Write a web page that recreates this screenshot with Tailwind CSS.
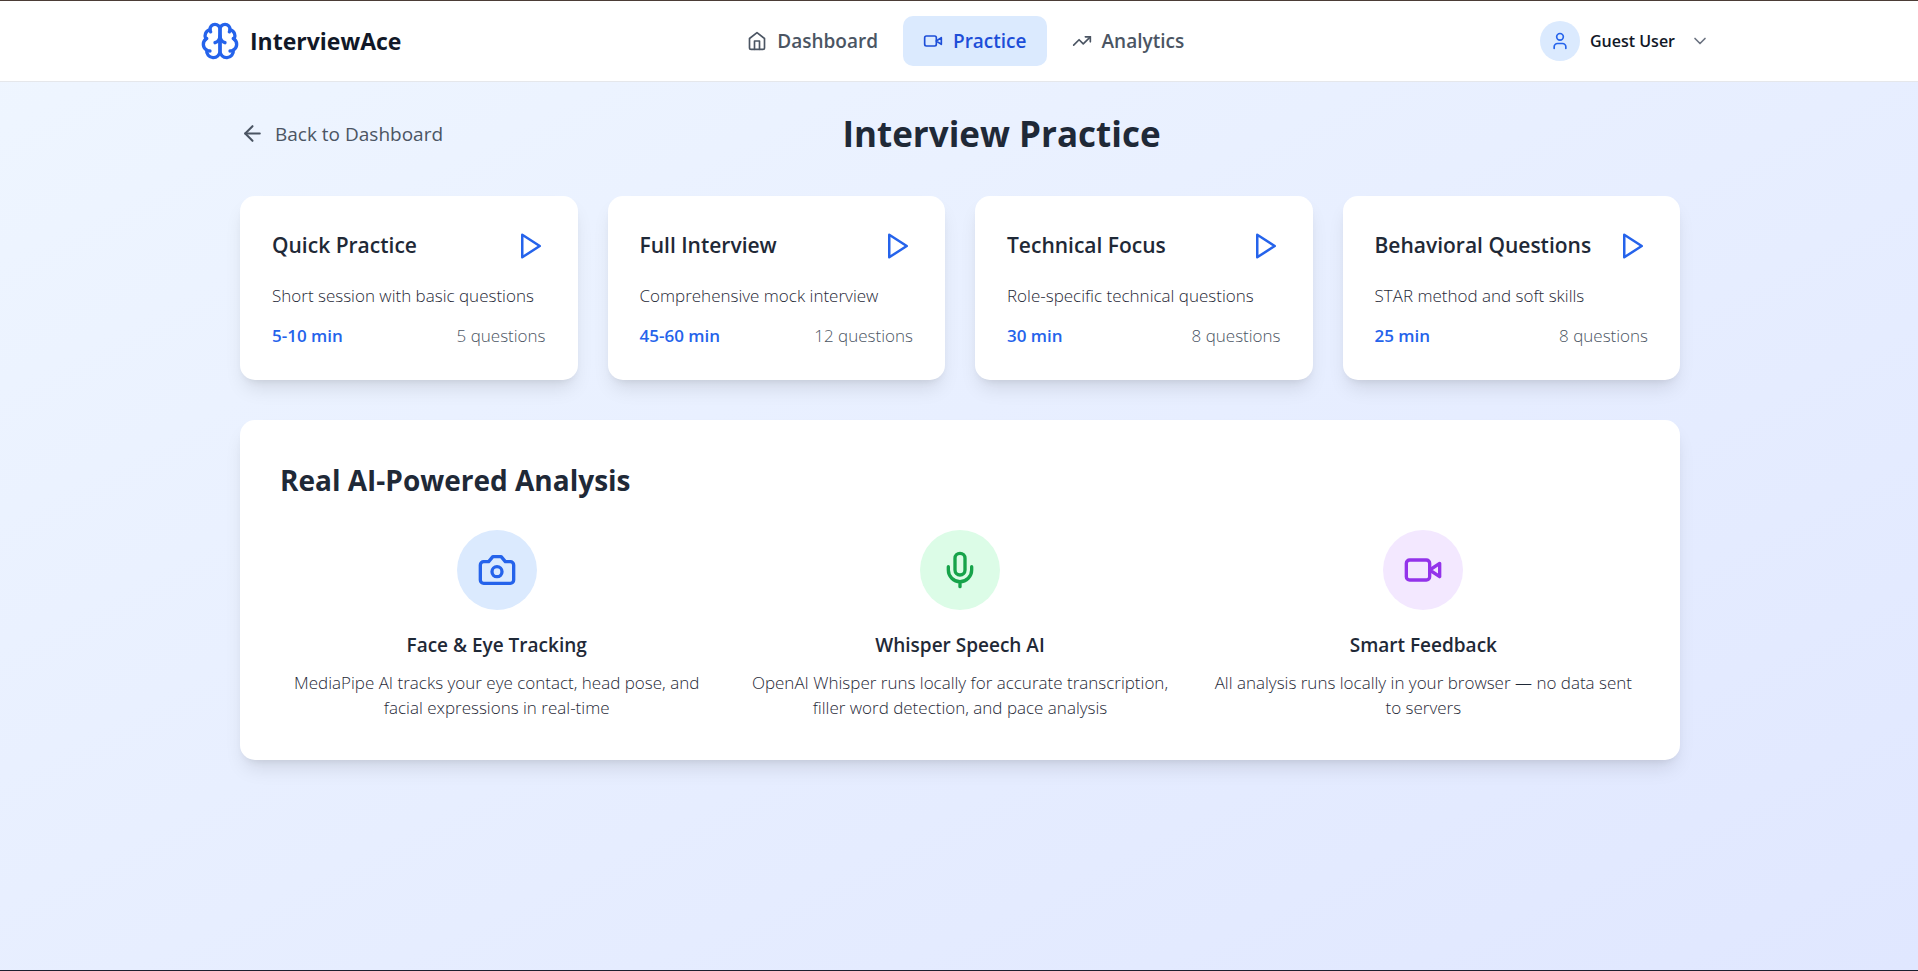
<!DOCTYPE html>
<html lang="en">
<head>
    <meta charset="UTF-8">
    <meta name="viewport" content="width=device-width, initial-scale=1.0">
    <title>InterviewAce - Practice</title>
    <script src="https://cdn.jsdelivr.net/npm/@tailwindcss/browser@4"></script>
</head>
<body class="flex min-h-screen flex-col border-t border-b border-t-[#4b3c36] border-b-[#1b2030] bg-linear-to-br from-[#eff6ff] to-[#e0e7ff] font-['Open_Sans','Noto_Sans',sans-serif] text-[#1f2937]">

<!-- top bar -->
<header class="border-b border-[#e5e7eb] bg-white">
    <div class="mx-auto flex h-20 max-w-[1602px] items-center justify-between pr-10 pl-[42px]">
        <a href="#" class="flex items-center gap-[10px] text-[23px] font-bold text-[#111827]">
            <svg class="size-10 text-[#2563eb]" viewBox="0 0 24 24" fill="none" stroke="currentColor" stroke-width="2" stroke-linecap="round" stroke-linejoin="round">
                <path d="M12 5a3 3 0 1 0-5.997.125 4 4 0 0 0-2.526 5.77 4 4 0 0 0 .556 6.588A4 4 0 1 0 12 18Z"/>
                <path d="M12 5a3 3 0 1 1 5.997.125 4 4 0 0 1 2.526 5.77 4 4 0 0 1-.556 6.588A4 4 0 1 1 12 18Z"/>
                <path d="M15 13a4.5 4.5 0 0 1-3-4 4.5 4.5 0 0 1-3 4"/>
                <path d="M17.599 6.5a3 3 0 0 0 .399-1.375"/>
                <path d="M6.003 5.125A3 3 0 0 0 6.401 6.5"/>
                <path d="M3.477 10.896a4 4 0 0 1 .585-.396"/>
                <path d="M19.938 10.5a4 4 0 0 1 .585.396"/>
                <path d="M6 18a4 4 0 0 1-1.967-.516"/>
                <path d="M19.967 17.484A4 4 0 0 1 18 18"/>
            </svg>
            <span>InterviewAce</span>
        </a>

        <nav class="flex gap-[5px] text-[19px] leading-[30px] font-semibold text-[#4b5563]">
            <a href="#" class="flex items-center gap-[10px] rounded-[10px] px-5 py-[10px]">
                <svg class="size-5" viewBox="0 0 24 24" fill="none" stroke="currentColor" stroke-width="2" stroke-linecap="round" stroke-linejoin="round">
                    <path d="m3 9 9-7 9 7v11a2 2 0 0 1-2 2H5a2 2 0 0 1-2-2z"/>
                    <polyline points="9 22 9 12 15 12 15 22"/>
                </svg>
                Dashboard
            </a>
            <a href="#" class="flex items-center gap-[10px] rounded-[10px] bg-[#dbeafe] px-5 py-[10px] text-[#1d4ed8]">
                <svg class="size-5" viewBox="0 0 24 24" fill="none" stroke="currentColor" stroke-width="2" stroke-linecap="round" stroke-linejoin="round">
                    <path d="m22 8-6 4 6 4V8Z"/>
                    <rect width="14" height="12" x="2" y="6" rx="2"/>
                </svg>
                Practice
            </a>
            <a href="#" class="flex items-center gap-[10px] rounded-[10px] px-5 py-[10px]">
                <svg class="size-5" viewBox="0 0 24 24" fill="none" stroke="currentColor" stroke-width="2" stroke-linecap="round" stroke-linejoin="round">
                    <polyline points="22 7 13.5 15.5 8.5 10.5 2 17"/>
                    <polyline points="16 7 22 7 22 13"/>
                </svg>
                Analytics
            </a>
        </nav>

        <button type="button" class="flex items-center gap-[10px] p-[10px] text-[16px] leading-[25px] font-semibold text-[#111827]">
            <span class="flex size-10 items-center justify-center rounded-full bg-[#dbeafe] text-[#2563eb]">
                <svg class="size-5" viewBox="0 0 24 24" fill="none" stroke="currentColor" stroke-width="2" stroke-linecap="round" stroke-linejoin="round">
                    <path d="M19 21v-2a4 4 0 0 0-4-4H9a4 4 0 0 0-4 4v2"/>
                    <circle cx="12" cy="7" r="4"/>
                </svg>
            </span>
            <span>Guest User</span>
            <svg class="ml-[5px] size-5 text-[#6b7280]" viewBox="0 0 24 24" fill="none" stroke="currentColor" stroke-width="2" stroke-linecap="round" stroke-linejoin="round">
                <path d="m6 9 6 6 6-6"/>
            </svg>
        </button>
    </div>
</header>

<main class="mx-auto w-full max-w-[1442px] grow pt-[29px] pb-10 pl-[2px]">
    <div class="mb-10 flex items-center justify-between">
        <button type="button" class="flex items-center gap-[10px] text-[19px] leading-[30px] text-[#4b5563]">
            <svg class="size-[25px]" viewBox="0 0 24 24" fill="none" stroke="currentColor" stroke-width="2" stroke-linecap="round" stroke-linejoin="round">
                <path d="m12 19-7-7 7-7"/>
                <path d="M19 12H5"/>
            </svg>
            Back to Dashboard
        </button>
        <h1 class="text-[35px] leading-[45px] font-bold">Interview Practice</h1>
        <div class="w-[120px]"></div>
    </div>

    <!-- session types, filled in below -->
    <div id="sessions" class="mb-10 grid grid-cols-4 gap-[30px]"></div>

    <section class="rounded-[15px] bg-white p-10 shadow-[0_12px_19px_-4px_rgb(0_0_0/0.1),0_5px_8px_-5px_rgb(0_0_0/0.1)]">
        <h2 class="mb-[30px] text-[28px] leading-10 font-bold">Real AI-Powered Analysis</h2>
        <div class="grid grid-cols-3 gap-[30px] text-center">
            <div>
                <div class="mx-auto mb-5 flex size-20 items-center justify-center rounded-full bg-[#dbeafe] text-[#2563eb]">
                    <svg class="size-10" viewBox="0 0 24 24" fill="none" stroke="currentColor" stroke-width="2" stroke-linecap="round" stroke-linejoin="round">
                        <path d="M14.5 4h-5L7 7H4a2 2 0 0 0-2 2v9a2 2 0 0 0 2 2h16a2 2 0 0 0 2-2V9a2 2 0 0 0-2-2h-3l-2.5-3z"/>
                        <circle cx="12" cy="13" r="3"/>
                    </svg>
                </div>
                <h3 class="mb-[10px] text-[19px] leading-[30px] font-semibold">Face &amp; Eye Tracking</h3>
                <p class="text-[17px] leading-[25px] font-light text-[#1f2937]">MediaPipe AI tracks your eye contact, head pose, and facial expressions in real-time</p>
            </div>
            <div>
                <div class="mx-auto mb-5 flex size-20 items-center justify-center rounded-full bg-[#dcfce7] text-[#16a34a]">
                    <svg class="size-10" viewBox="0 0 24 24" fill="none" stroke="currentColor" stroke-width="2" stroke-linecap="round" stroke-linejoin="round">
                        <path d="M12 2a3 3 0 0 0-3 3v7a3 3 0 0 0 6 0V5a3 3 0 0 0-3-3Z"/>
                        <path d="M19 10v2a7 7 0 0 1-14 0v-2"/>
                        <path d="M12 19v3"/>
                    </svg>
                </div>
                <h3 class="mb-[10px] text-[19px] leading-[30px] font-semibold">Whisper Speech AI</h3>
                <p class="text-[17px] leading-[25px] font-light text-[#1f2937]">OpenAI Whisper runs locally for accurate transcription, filler word detection, and pace analysis</p>
            </div>
            <div>
                <div class="mx-auto mb-5 flex size-20 items-center justify-center rounded-full bg-[#f3e8ff] text-[#9333ea]">
                    <svg class="size-10" viewBox="0 0 24 24" fill="none" stroke="currentColor" stroke-width="2" stroke-linecap="round" stroke-linejoin="round">
                        <path d="m22 8-6 4 6 4V8Z"/>
                        <rect width="14" height="12" x="2" y="6" rx="2"/>
                    </svg>
                </div>
                <h3 class="mb-[10px] text-[19px] leading-[30px] font-semibold">Smart Feedback</h3>
                <p class="text-[17px] leading-[25px] font-light text-[#1f2937]">All analysis runs locally in your browser — no data sent to servers</p>
            </div>
        </div>
    </section>
</main>

<script>
    const sessions = [
        { title: "Quick Practice", text: "Short session with basic questions", time: "5-10 min", count: 5 },
        { title: "Full Interview", text: "Comprehensive mock interview", time: "45-60 min", count: 12 },
        { title: "Technical Focus", text: "Role-specific technical questions", time: "30 min", count: 8 },
        { title: "Behavioral Questions", text: "STAR method and soft skills", time: "25 min", count: 8 },
    ];

    let result = "";
    sessions.forEach((item) => {
        result += `
        <button type="button" class="rounded-[15px] bg-white p-8 text-left shadow-[0_12px_19px_-4px_rgb(0_0_0/0.1),0_5px_8px_-5px_rgb(0_0_0/0.1)]">
            <span class="mb-5 flex items-center justify-between">
                <span class="text-[21px] leading-[35px] font-semibold">${item.title}</span>
                <svg class="size-[30px] shrink-0 text-[#2563eb]" viewBox="0 0 24 24" fill="none" stroke="currentColor" stroke-width="2" stroke-linecap="round" stroke-linejoin="round">
                    <polygon points="5 3 19 12 5 21 5 3"/>
                </svg>
            </span>
            <span class="mb-[15px] block text-[17px] leading-[25px] font-light text-[#1f2937]">${item.text}</span>
            <span class="flex justify-between text-[17px] leading-[25px]">
                <span class="font-semibold text-[#2563eb]">${item.time}</span>
                <span class="font-light text-[#4b5563]">${item.count} questions</span>
            </span>
        </button>`;
    });
    document.getElementById("sessions").innerHTML = result;
</script>
</body>
</html>
